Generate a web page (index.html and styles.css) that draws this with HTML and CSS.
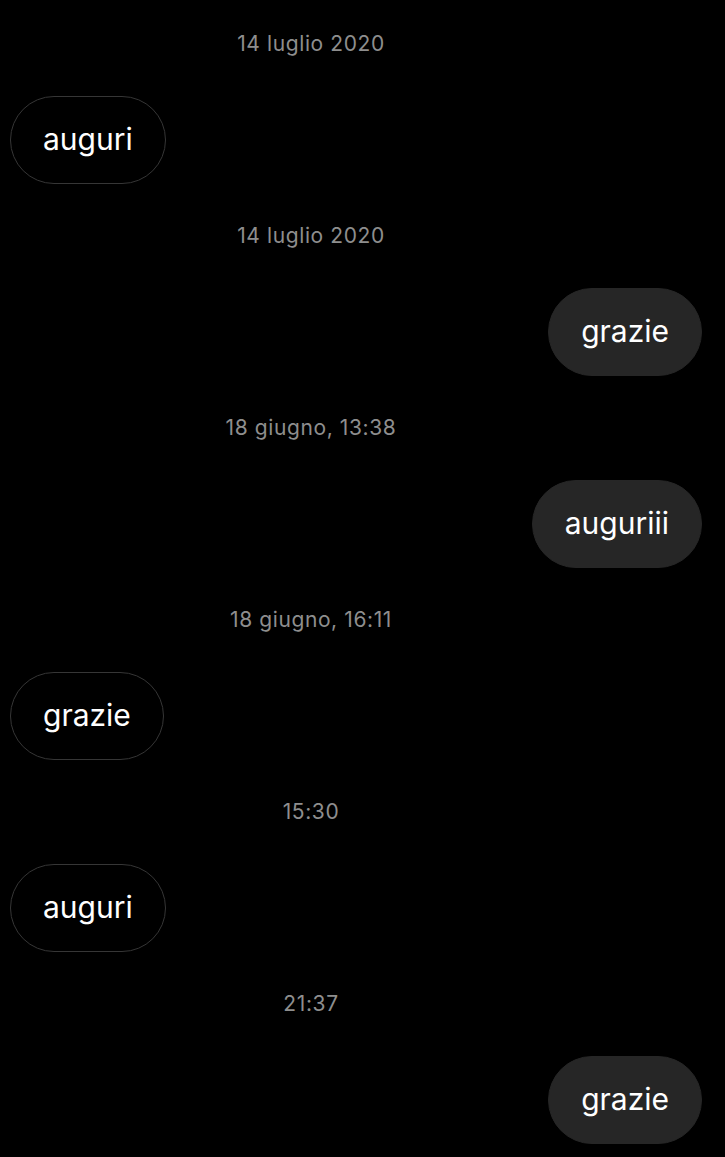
FILE: index.html
```html
<!DOCTYPE html>
<html lang="it">
<head>
  <meta charset="UTF-8">
  <title>Messaggi</title>
  <link rel="stylesheet" href="styles.css">
</head>
<body>
  <div class="thread">
    <div class="time">14 luglio 2020</div>
    <div class="row in"><div class="bubble">auguri</div></div>

    <div class="time">14 luglio 2020</div>
    <div class="row out"><div class="bubble">grazie</div></div>

    <div class="time">18 giugno, 13:38</div>
    <div class="row out"><div class="bubble">auguriii</div></div>

    <div class="time">18 giugno, 16:11</div>
    <div class="row in"><div class="bubble">grazie</div></div>

    <div class="time">15:30</div>
    <div class="row in"><div class="bubble">auguri</div></div>

    <div class="time">21:37</div>
    <div class="row out"><div class="bubble">grazie</div></div>
  </div>
</body>
</html>
```

FILE: styles.css
```css
body {
  margin: 0;
  background-color: #000;
  font-family: Inter, 'Noto Sans', sans-serif;
  color: #fff;
}

.thread {
  display: flex;
  flex-direction: column;
  padding: 32px 23px 0 10px;
}

.time {
  height: 24px;
  line-height: 24px;
  font-size: 21px;
  letter-spacing: 0.6px;
  color: #8e8e8e;
  text-align: center;
  padding-right: 90px;
  margin-bottom: 40px;
}

.row {
  display: flex;
  margin-bottom: 40px;
}

.row.out {
  justify-content: flex-end;
}

.bubble {
  height: 88px;
  box-sizing: border-box;
  padding: 0 32px;
  border-radius: 44px;
  font-size: 30px;
  line-height: 85px;
  border: 1.5px solid #363636;
}

.row.out .bubble {
  background-color: #262626;
  border-color: #262626;
}
```
